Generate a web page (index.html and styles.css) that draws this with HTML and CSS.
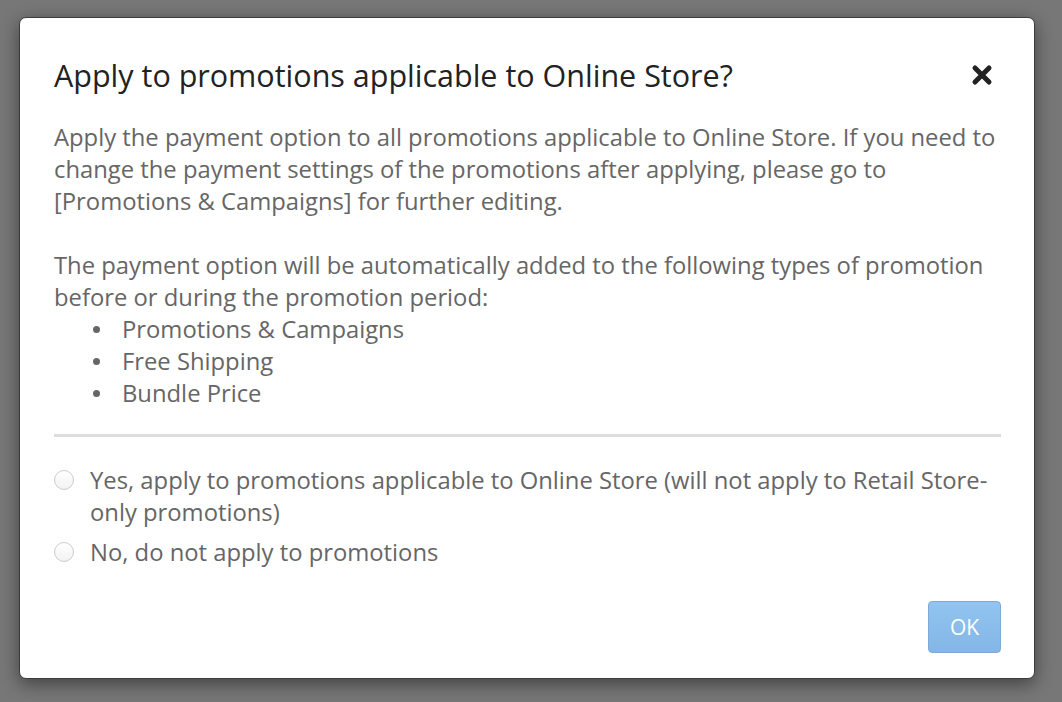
FILE: index.html
```html
<!DOCTYPE html>
<html lang="en">
<head>
    <meta charset="UTF-8">
    <title>Apply to promotions</title>
    <link rel="stylesheet" href="styles.css">
</head>
<body>
    <div class="modal">
        <div class="modal-header">
            <h2 class="modal-title">Apply to promotions applicable to Online Store?</h2>
            <a class="close" href="javascript:;">
                <svg width="22" height="22" viewBox="0 0 22 22">
                    <path d="M4 4 L18 18 M18 4 L4 18" stroke="#222" stroke-width="5" stroke-linecap="round"/>
                </svg>
            </a>
        </div>
        <div class="modal-body">
            <p>Apply the payment option to all promotions applicable to Online Store. If you need to change the payment settings of the promotions after applying, please go to [Promotions &amp; Campaigns] for further editing.</p>
            <p>The payment option will be automatically added to the following types of promotion before or during the promotion period:</p>
            <ul class="types">
                <li>Promotions &amp; Campaigns</li>
                <li>Free Shipping</li>
                <li>Bundle Price</li>
            </ul>
            <hr class="divider">
            <label class="option">
                <span class="radio"></span>
                <span>Yes, apply to promotions applicable to Online Store (will not apply to Retail Store-only promotions)</span>
            </label>
            <label class="option">
                <span class="radio"></span>
                <span>No, do not apply to promotions</span>
            </label>
        </div>
        <div class="modal-footer">
            <button class="btn-ok">OK</button>
        </div>
    </div>
</body>
</html>
```

FILE: styles.css
```css
*{
    margin: 0;
    padding: 0;
    box-sizing: border-box;
}
body{
    width: 1062px;
    height: 702px;
    background-color: #777;
    font-family: "Open Sans", "Liberation Sans", sans-serif;
    overflow: hidden;
}
.modal{
    width: 1016px;
    height: 662px;
    margin: 17px 0 0 19px;
    padding: 0 33px 0 34px;
    background-color: #fff;
    border: 1px solid #3c3c3c;
    border-radius: 7px;
    box-shadow: 0 5px 18px rgba(0,0,0,0.45);
    display: flex;
    flex-direction: column;
}
.modal-header{
    display: flex;
    align-items: center;
    justify-content: space-between;
    height: 86px;
    padding-top: 28px;
}
.modal-title{
    font-size: 30.5px;
    font-weight: 400;
    color: #222;
    line-height: 36px;
}
.close{
    display: flex;
    margin-right: 8px;
}
.modal-body{
    padding-top: 17px;
    font-size: 23.8px;
    line-height: 32px;
    color: #666;
}
.modal-body p{
    margin-bottom: 32px;
}
.modal-body p + p{
    margin-bottom: 0;
}
.types{
    list-style: none;
    padding-left: 68px;
}
.types li{
    display: flex;
    align-items: flex-start;
}
.types li::before{
    content: "";
    flex: none;
    width: 7px;
    height: 7px;
    margin: 13px 22px 0 -29px;
    border-radius: 50%;
    background-color: #666;
}
.divider{
    border: none;
    height: 3px;
    background-color: #ddd;
    margin: 25px 0 27px;
}
.option{
    display: flex;
    align-items: flex-start;
    gap: 16px;
    margin-bottom: 8px;
}
.radio{
    flex: none;
    width: 20px;
    height: 20px;
    margin-top: 6px;
    border: 1px solid #ccc;
    border-radius: 50%;
    background: linear-gradient(#fff, #f2f2f2);
}
.modal-footer{
    display: flex;
    justify-content: flex-end;
    padding-top: 25px;
}
.btn-ok{
    width: 73px;
    height: 52px;
    font-family: inherit;
    font-size: 21px;
    color: #fff;
    background: linear-gradient(#92c4f1, #84b6e6);
    border: 1px solid #7fa9d6;
    border-radius: 4px;
}
```
